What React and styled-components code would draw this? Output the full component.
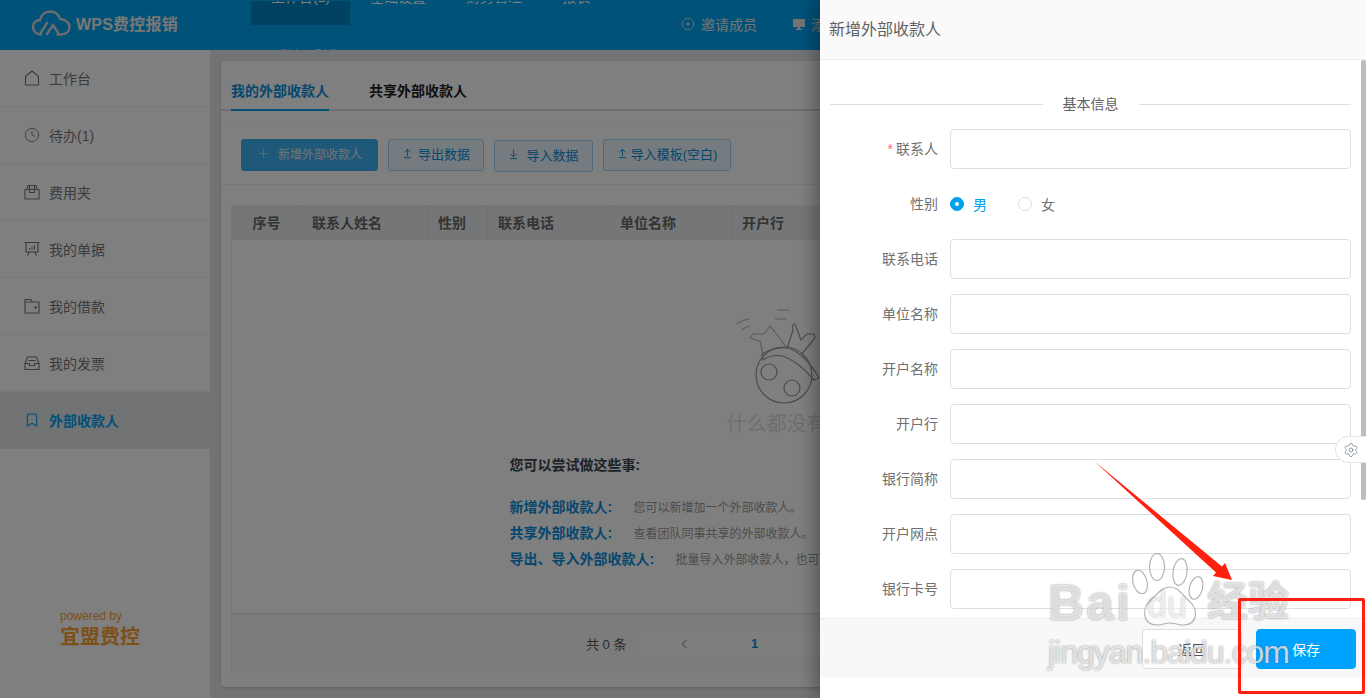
import React from 'react';
import styled, { createGlobalStyle } from 'styled-components';
import {
  Clock, Bookmark, CirclePlus, Plus, ArrowUpFromLine, ArrowDownToLine,
  ChevronLeft, Settings,
} from 'lucide-react';

const GlobalStyle = createGlobalStyle`
  html, body { margin: 0; padding: 0; height: 100%; }
  body {
    font-family: "Liberation Sans", "Noto Sans CJK SC", sans-serif;
    font-size: 14px;
    color: #333;
  }
  * { box-sizing: border-box; }
`;

const Page = styled.div`
  position: relative;
  width: 1366px;
  height: 698px;
  overflow: hidden;
  background: #e3e6ea;
`;

const Header = styled.header`
  display: flex;
  height: 50px;
  background: #00a4f2;
  border-top: 1px solid #00a4f2;
  overflow: hidden;
`;

const Logo = styled.div`
  display: flex;
  align-items: center;
  gap: 5px;
  width: 251px;
  padding: 0 0 5px 32px;
  flex-shrink: 0;
  color: #f0f0f0;
  font-size: 16px;
  font-weight: bold;
  letter-spacing: 0.2px;
`;

const Nav = styled.nav`
  display: flex;
  flex-wrap: wrap;
  align-content: flex-start;
  width: 410px;
  margin-top: -24px;
  flex-shrink: 0;
`;

const NavItem = styled.div`
  height: 48px;
  margin-bottom: 11px;
  padding: 0 20px;
  margin-left: ${p => p.$shift || 0}px;
  line-height: 40px;
  text-align: center;
  font-size: 14px;
  color: #fff;
  background: ${p => (p.$active ? '#0085c5' : 'transparent')};
`;

const HeadLinks = styled.div`
  display: flex;
  align-items: center;
  gap: 36px;
  margin-left: 20px;
  padding-bottom: 3px;
  color: #e8e8e8;
  font-size: 14px;
  white-space: nowrap;
`;

const HeadLink = styled.span`
  display: flex;
  align-items: center;
  gap: 6px;
`;

const Body = styled.div`
  display: flex;
  height: 648px;
`;

const Sidebar = styled.aside`
  display: flex;
  flex-direction: column;
  width: 210px;
  flex-shrink: 0;
  background: #fff;
`;

const SideItem = styled.div`
  display: flex;
  align-items: center;
  gap: 9px;
  height: 57px;
  padding-left: 24px;
  border-bottom: 1px solid ${p => (p.$active ? 'transparent' : '#f2f2f2')};
  color: ${p => (p.$active ? '#00a0f0' : '#777')};
  font-weight: ${p => (p.$active ? 'bold' : 'normal')};
  background: ${p => (p.$active ? '#e3e6ea' : 'transparent')};
`;

const Powered = styled.div`
  margin-top: auto;
  padding: 0 0 47px 60px;
  color: #f8a030;
`;

const PoweredBy = styled.div`
  font-size: 12px;
  line-height: 14px;
`;

const PoweredName = styled.div`
  font-size: 20px;
  line-height: 28px;
  font-weight: bold;
`;

const Main = styled.main`
  flex: 1;
  min-width: 0;
  padding: 11px 35px 11px 11px;
`;

const Card = styled.section`
  display: flex;
  flex-direction: column;
  height: 626px;
  background: #fff;
  border-radius: 4px;
  box-shadow: 0 1px 3px rgba(0, 0, 0, 0.15);
`;

const Tabs = styled.div`
  display: flex;
  gap: 40px;
  height: 50px;
  padding-left: 10px;
  border-bottom: 2px solid #dcdfe6;
`;

const Tab = styled.div`
  height: 50px;
  line-height: 60px;
  font-size: 14px;
  font-weight: bold;
  color: ${p => (p.$active ? '#0a8fdc' : '#222')};
  border-bottom: 2px solid ${p => (p.$active ? '#00a0f0' : 'transparent')};
`;

const Toolbar = styled.div`
  display: flex;
  align-items: center;
  gap: 10px;
  height: 60px;
  margin-top: 14px;
  padding-left: 20px;
  border-top: 1px solid #f7f7f7;
  border-bottom: 1px solid #eee;
`;

const ToolButton = styled.button`
  display: flex;
  align-items: center;
  justify-content: center;
  gap: ${p => p.$gap || 5}px;
  width: ${p => p.$w}px;
  height: 32px;
  margin-top: ${p => p.$drop || 0}px;
  padding: 0 0 3px;
  font: inherit;
  font-size: ${p => (p.$primary ? 12 : 13)}px;
  border-radius: 3px;
  color: ${p => (p.$primary ? '#e8e8e8' : '#0a8fdc')};
  background: ${p => (p.$primary ? '#3fb2f2' : '#ecf6fe')};
  border: 1px solid ${p => (p.$primary ? '#3fb2f2' : '#9ed4f5')};
`;

const Table = styled.div`
  display: flex;
  flex-direction: column;
  flex: 1;
  margin: 20px 10px 14px;
  min-height: 0;
  border-left: 1px solid #eee;
`;

const TableHead = styled.div`
  display: grid;
  grid-template-columns: 70px 126px 60px 122px 122px 1fr;
  height: 35px;
  flex-shrink: 0;
  background: #ebedf0;
  color: #666;
  font-weight: bold;
`;

const HeadCell = styled.div`
  display: flex;
  align-items: center;
  justify-content: ${p => (p.$center ? 'center' : 'flex-start')};
  padding: 0 0 2px ${p => (p.$center ? 0 : 10)}px;
  border-right: 1px solid #e2e4e8;
`;

const TableBody = styled.div`
  display: flex;
  flex-direction: column;
  align-items: center;
  flex: 1;
  padding-top: 68px;
`;

const EmptyText = styled.div`
  width: 100px;
  margin-top: 1px;
  font-size: 20px;
  line-height: 30px;
  color: #ddd;
`;

const Tips = styled.div`
  width: 534px;
  margin-top: 15px;
`;

const TipsTitle = styled.div`
  margin-bottom: 17px;
  line-height: 22px;
  font-weight: bold;
  color: #3a4250;
`;

const TipRow = styled.div`
  display: flex;
  align-items: center;
  height: 26px;
  white-space: nowrap;
`;

const TipName = styled.span`
  width: ${p => p.$w}px;
  flex-shrink: 0;
  font-weight: bold;
  color: #0a8fdc;
`;

const TipDesc = styled.span`
  font-size: 12px;
  color: #999;
`;

const Pagination = styled.div`
  display: flex;
  align-items: center;
  height: 60px;
  flex-shrink: 0;
  padding-left: 354px;
  border-top: 1px solid #ddd;
  background: #f8f8f8;
`;

const Total = styled.span`
  width: 52px;
  font-size: 13px;
  color: #555;
`;

const Pager = styled.div`
  display: flex;
  align-items: center;
  height: 28px;
  width: 400px;
  padding-left: 39px;
  background: #fcfcfc;
  color: #aaa;
`;

const PageNumber = styled.span`
  margin-left: 60px;
  font-weight: bold;
  font-size: 13px;
  color: #0a8fdc;
`;

const Mask = styled.div`
  position: absolute;
  inset: 0;
  background: rgba(0, 0, 0, 0.5);
`;

const Drawer = styled.aside`
  position: absolute;
  top: 0;
  right: 0;
  bottom: 0;
  width: 546px;
  display: flex;
  flex-direction: column;
  background: #fff;
  box-shadow: -6px 0 16px rgba(0, 0, 0, 0.3);
`;

const DrawerHead = styled.div`
  display: flex;
  align-items: center;
  height: 60px;
  flex-shrink: 0;
  padding: 0 0 3px 9px;
  background: #fafafa;
  border-bottom: 1px solid #eee;
  font-size: 16px;
  color: #606060;
`;

const DrawerBody = styled.div`
  position: relative;
  flex: 1;
  min-height: 0;
  overflow: hidden;
  padding: 34px 15px 0 10px;
`;

const ScrollThumb = styled.div`
  position: absolute;
  top: 0;
  right: 0;
  width: 5px;
  height: 440px;
  background: #bdbdbd;
  border-radius: 2px;
`;

const Divider = styled.div`
  display: flex;
  align-items: center;
  gap: 20px;
  height: 20px;
  margin-bottom: 15px;
  color: #606060;
  line-height: 20px;
  &::before, &::after {
    content: '';
    flex: 1;
    height: 1px;
    background: #dcdfe6;
  }
`;

const FormRow = styled.div`
  display: flex;
  align-items: center;
  gap: 12px;
  height: 40px;
  margin-bottom: 15px;
`;

const Label = styled.label`
  width: 108px;
  padding-bottom: 3px;
  flex-shrink: 0;
  text-align: right;
  color: #707070;
`;

const Required = styled.span`
  color: #f56c6c;
  margin-right: 3px;
`;

const TextInput = styled.input`
  flex: 1;
  min-width: 0;
  height: 40px;
  border: 1px solid #dcdfe6;
  border-radius: 4px;
  background: #fff;
`;

const RadioGroup = styled.div`
  display: flex;
  align-items: center;
  gap: 31px;
`;

const RadioOption = styled.span`
  display: flex;
  align-items: center;
  gap: 9px;
  width: 37px;
  color: ${p => (p.$on ? '#00a0f0' : '#707070')};
  white-space: nowrap;
`;

const RadioDot = styled.span`
  display: flex;
  align-items: center;
  justify-content: center;
  width: 14px;
  height: 14px;
  flex-shrink: 0;
  border-radius: 50%;
  border: 1px solid ${p => (p.$on ? '#00a0f0' : '#dcdfe6')};
  background: ${p => (p.$on ? '#00a0f0' : '#fff')};
  &::after {
    content: '';
    width: 4px;
    height: 4px;
    border-radius: 50%;
    background: ${p => (p.$on ? '#fff' : 'transparent')};
  }
`;

const GearTab = styled.div`
  position: absolute;
  top: 376px;
  right: 0;
  display: flex;
  align-items: center;
  padding-left: 7px;
  width: 31px;
  height: 27px;
  background: #fff;
  border: 1px solid #e4e7ed;
  border-right: 0;
  border-radius: 14px 0 0 14px;
  color: #7d8a9c;
`;

const DrawerFoot = styled.div`
  display: flex;
  align-items: center;
  justify-content: flex-end;
  gap: 14px;
  height: 60px;
  margin-bottom: 20px;
  flex-shrink: 0;
  padding-right: 10px;
  background: #f8f8f8;
  border-top: 1px solid #eee;
`;

const FootButton = styled.button`
  width: 100px;
  height: 40px;
  padding: 0;
  font: inherit;
  border-radius: 4px;
  color: ${p => (p.$primary ? '#fff' : '#555')};
  background: ${p => (p.$primary ? '#00a2ff' : '#fff')};
  border: 1px solid ${p => (p.$primary ? '#00a2ff' : '#dcdfe6')};
`;

const Annotation = styled.svg`
  position: absolute;
  left: 1090px;
  top: 458px;
`;

const RedBox = styled.div`
  position: absolute;
  left: 1238px;
  top: 598px;
  width: 127px;
  height: 96px;
  border: 3px solid #ff1f0f;
  border-radius: 2px;
`;

const Watermark = styled.div`
  position: absolute;
  left: 1048px;
  top: 553px;
  width: 250px;
  height: 118px;
  color: rgba(255, 255, 255, 0.72);
  text-shadow: 0 0 2px rgba(80, 80, 80, 0.7);
  pointer-events: none;
`;

const MarkTop = styled.div`
  display: flex;
  align-items: flex-end;
  height: 80px;
  font-size: 50px;
  line-height: 60px;
  font-weight: bold;
`;

const MarkLatin = styled.span`
  width: 99px;
  letter-spacing: 2px;
`;

const MarkDu = styled.span`
  width: 60px;
  font-size: 36px;
  line-height: 56px;
  font-weight: normal;
`;

const MarkCn = styled.span`
  font-size: 41px;
  line-height: 62px;
  white-space: nowrap;
`;

const MarkUrl = styled.div`
  font-size: 32px;
  line-height: 38px;
  letter-spacing: -1px;
  white-space: nowrap;
`;

const MarkPaw = styled.svg`
  position: absolute;
  left: 84px;
  top: 0;
`;

const HomeIcon = () => (
  <svg width="16" height="16" viewBox="0 0 16 16" fill="none" stroke="currentColor" strokeWidth="1.1">
    <path d="M1.500 6.500L8 1l6.500 5.500V15h-13z" />
  </svg>
);

const BoxIcon = () => (
  <svg width="16" height="16" viewBox="0 0 16 16" fill="none" stroke="currentColor" strokeWidth="1.1">
    <path d="M1 5.500h14V15H1zM3 5.500L4 1.500h8l1 4M5.500 1.500v7h5v-7" />
  </svg>
);

const BoardIcon = () => (
  <svg width="16" height="16" viewBox="0 0 16 16" fill="none" stroke="currentColor" strokeWidth="1.1">
    <path d="M0.500 1.500h15M2 1.500v9.500h12V1.500M5 11l-1.500 3.500M11 11l1.500 3.500M5.500 8.500v-1.500M8 8.500v-3M10.500 8.500v-4.500" />
  </svg>
);

const FolderIcon = () => (
  <svg width="16" height="16" viewBox="0 0 16 16" fill="none" stroke="currentColor" strokeWidth="1.1">
    <path d="M1 1.500h6l1.500 2.500H15v11H1zM1 4h7.500" />
    <circle cx="11.500" cy="9.500" r="0.800" fill="currentColor" />
  </svg>
);

const TrayIcon = () => (
  <svg width="16" height="16" viewBox="0 0 16 16" fill="none" stroke="currentColor" strokeWidth="1.1">
    <path d="M1 8.500L3.500 2h9L15 8.500V14.500H1zM1 8.500h4.500v2h5v-2H15M4.500 5.500h7" />
  </svg>
);

const CloudLogo = () => (
  <svg width="39" height="26" viewBox="0 0 39 26" fill="none" stroke="#d9d9d9" strokeWidth="2.400" strokeLinecap="round">
    <path d="M9 24.500C4 24.500 1 21 1 17c0-4 3-7 7-7 1-5 5-8.500 10-8.500 5 0 9 3 10 7.500 5 0 9.500 3.500 9.500 8 0 4.500-3.500 7.500-8 7.500h-4" />
    <path d="M8 24l7-11M15 24l6-9 6 9" />
  </svg>
);

const EmptyArt = () => (
  <svg width="100" height="100" viewBox="0 0 100 100" fill="none" stroke="#999" strokeWidth="1.200">
    <circle cx="57" cy="67" r="28" />
    <circle cx="42" cy="64" r="8" />
    <circle cx="65" cy="80" r="8" />
    <path d="M35 46Q50 38 62 40Q80 48 92 70L87 72Q72 54 56 48Q44 46 36 52Z" />
    <path d="M60 41L66 22Q64 16 68 16L74 32L80 26L87 26L88 30L75 46" />
    <g stroke="#b8b8b8">
      <path d="M36 46L33 33L23 30L26 26L37 26L43 18L48 24L60 40" />
      <path d="M10 16Q15 12 22 11M15 22Q18 19 23 18M50 2H62M48 11H60" />
    </g>
  </svg>
);

const sideItems = [
  { label: '工作台', icon: <HomeIcon /> },
  { label: '待办(1)', icon: <Clock size={16} strokeWidth={1.3} /> },
  { label: '费用夹', icon: <BoxIcon /> },
  { label: '我的单据', icon: <BoardIcon /> },
  { label: '我的借款', icon: <FolderIcon /> },
  { label: '我的发票', icon: <TrayIcon /> },
  { label: '外部收款人', icon: <Bookmark size={16} strokeWidth={1.6} />, active: true },
];

const fields = ['联系电话', '单位名称', '开户名称', '开户行', '银行简称', '开户网点', '银行卡号'];

export default function App() {
  return (
    <Page>
      <GlobalStyle />
      <Header>
        <Logo>
          <CloudLogo />
          <span>WPS费控报销</span>
        </Logo>
        <Nav>
          <NavItem $active>工作台(1)</NavItem>
          <NavItem>基础设置</NavItem>
          <NavItem>财务管理</NavItem>
          <NavItem>报表</NavItem>
          <NavItem $shift={9}>数据看板</NavItem>
        </Nav>
        <HeadLinks>
          <HeadLink><CirclePlus size={14} strokeWidth={1.4} />邀请成员</HeadLink>
          <HeadLink>
            <svg width="12" height="12" viewBox="0 0 12 12" fill="currentColor"><path d="M0 1h12v8H7v1.500h2V12H3v-1.500h2V9H0z" /></svg>
            添加企业
          </HeadLink>
        </HeadLinks>
      </Header>
      <Body>
        <Sidebar>
          {sideItems.map(item => (
            <SideItem key={item.label} $active={item.active}>
              {item.icon}
              {item.label}
            </SideItem>
          ))}
          <Powered>
            <PoweredBy>powered by</PoweredBy>
            <PoweredName>宜盟费控</PoweredName>
          </Powered>
        </Sidebar>
        <Main>
          <Card>
            <Tabs>
              <Tab $active>我的外部收款人</Tab>
              <Tab>共享外部收款人</Tab>
            </Tabs>
            <Toolbar>
              <ToolButton $primary $w={137} $gap={8}><Plus size={13} strokeWidth={1.2} />新增外部收款人</ToolButton>
              <ToolButton $w={96}><ArrowUpFromLine size={11} />导出数据</ToolButton>
              <ToolButton $w={99} $drop={1} $gap={7}><ArrowDownToLine size={11} />导入数据</ToolButton>
              <ToolButton $w={128} $gap={3}><ArrowUpFromLine size={11} />导入模板(空白)</ToolButton>
            </Toolbar>
            <Table>
              <TableHead>
                <HeadCell $center>序号</HeadCell>
                <HeadCell>联系人姓名</HeadCell>
                <HeadCell>性别</HeadCell>
                <HeadCell>联系电话</HeadCell>
                <HeadCell>单位名称</HeadCell>
                <HeadCell>开户行</HeadCell>
              </TableHead>
              <TableBody>
                <EmptyArt />
                <EmptyText>什么都没有</EmptyText>
                <Tips>
                  <TipsTitle>您可以尝试做这些事:</TipsTitle>
                  <TipRow><TipName $w={124}>新增外部收款人:</TipName><TipDesc>您可以新增加一个外部收款人。</TipDesc></TipRow>
                  <TipRow><TipName $w={124}>共享外部收款人:</TipName><TipDesc>查看团队同事共享的外部收款人。</TipDesc></TipRow>
                  <TipRow><TipName $w={166}>导出、导入外部收款人:</TipName><TipDesc>批量导入外部收款人，也可导出数据。</TipDesc></TipRow>
                </Tips>
              </TableBody>
              <Pagination>
                <Total>共 0 条</Total>
                <Pager>
                  <ChevronLeft size={14} />
                  <PageNumber>1</PageNumber>
                </Pager>
              </Pagination>
            </Table>
          </Card>
        </Main>
      </Body>
      <Mask />
      <Drawer>
        <DrawerHead>新增外部收款人</DrawerHead>
        <DrawerBody>
          <Divider>基本信息</Divider>
          <FormRow>
            <Label><Required>*</Required>联系人</Label>
            <TextInput />
          </FormRow>
          <FormRow>
            <Label>性别</Label>
            <RadioGroup>
              <RadioOption $on><RadioDot $on />男</RadioOption>
              <RadioOption><RadioDot />女</RadioOption>
            </RadioGroup>
          </FormRow>
          {fields.map(name => (
            <FormRow key={name}>
              <Label>{name}</Label>
              <TextInput />
            </FormRow>
          ))}
          <ScrollThumb />
          <GearTab><Settings size={16} strokeWidth={1.2} /></GearTab>
        </DrawerBody>
        <DrawerFoot>
          <FootButton>返回</FootButton>
          <FootButton $primary>保存</FootButton>
        </DrawerFoot>
      </Drawer>
      <Watermark>
        <MarkPaw width="74" height="76" viewBox="0 0 74 76" fill="rgba(255,255,255,0.4)" stroke="rgba(130,130,130,0.6)" strokeWidth="1.200">
          <ellipse cx="25" cy="14" rx="7.500" ry="13.500" />
          <ellipse cx="48" cy="19" rx="7" ry="13.500" transform="rotate(8 48 19)" />
          <ellipse cx="8" cy="29" rx="7" ry="12" transform="rotate(-15 8 29)" />
          <ellipse cx="64" cy="35" rx="6.500" ry="11.500" transform="rotate(15 64 35)" />
          <path d="M38 34c9 0 12 8 19 14 9 7 10 24-6 24-5 0-8-2-13-2s-8 2-13 2c-15 0-15-17-7-24 7-6 11-14 20-14z" />
        </MarkPaw>
        <MarkTop>
          <MarkLatin>Bai</MarkLatin>
          <MarkDu>du</MarkDu>
          <MarkCn>经验</MarkCn>
        </MarkTop>
        <MarkUrl>jingyan.baidu.com</MarkUrl>
      </Watermark>
      <Annotation width="150" height="130" viewBox="0 0 150 130">
        <polygon points="4,3 132,108.500 135,105 142,122 123,118 126,114.500" fill="#ff2010" />
      </Annotation>
      <RedBox />
    </Page>
  );
}
